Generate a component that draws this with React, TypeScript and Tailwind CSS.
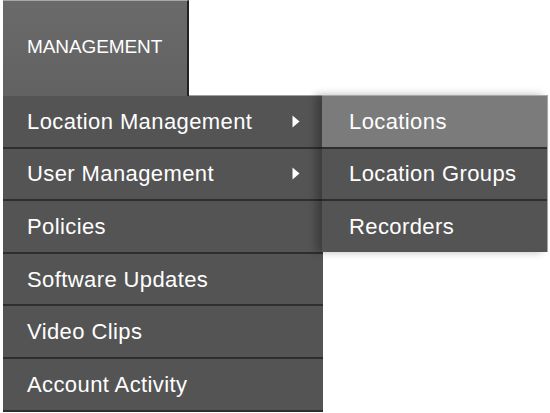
import React from "react";

// Dropdown menu: MANAGEMENT tab with nested "Location Management" submenu open

type Item = { label: string; sub?: boolean };

const MAIN_ITEMS: Item[] = [
  { label: "Location Management", sub: true },
  { label: "User Management", sub: true },
  { label: "Policies" },
  { label: "Software Updates" },
  { label: "Video Clips" },
  { label: "Account Activity" },
];

const SUB_ITEMS = ["Locations", "Location Groups", "Recorders"];

function Arrow() {
  return (
    <svg width="8" height="13" viewBox="0 0 8 13" className="shrink-0">
      <polygon points="0.5,0.5 7.5,6.5 0.5,12.5" fill="#ffffff" />
    </svg>
  );
}

export default function App() {
  return (
    <div
      className="w-[550px] h-[413px] overflow-hidden bg-white pl-[3px]"
      style={{ fontFamily: '"Liberation Sans", Arial, Helvetica, sans-serif' }}
    >
      {/* top tab */}
      <div className="relative z-10 -mb-px flex h-[96px] w-[186px] items-center border-t border-r-2 border-t-[#a8a8a8] border-r-[#222] bg-gradient-to-b from-[#6a6a6a] to-[#626262] pl-[24px] pb-[3px]">
        <span className="text-[19px] tracking-[-0.1px] text-white">MANAGEMENT</span>
      </div>

      {/* main menu */}
      <div className="relative w-[320px] border-t border-[#a0a0a0] bg-[#545454]">
        {MAIN_ITEMS.map((it) => (
          <div
            key={it.label}
            className="flex h-[52.6px] items-center justify-between border-b-2 border-[#2e2e2e] pl-[24px] pr-[23px]"
          >
            <span className="text-[22px] tracking-[0.4px] text-white">{it.label}</span>
            {it.sub && <Arrow />}
          </div>
        ))}

        {/* submenu */}
        <div className="absolute left-[319px] top-[-1px] w-[226px] border-t border-r border-[#a8a8a8] bg-[#545454] shadow-[-6px_0_8px_rgba(0,0,0,0.28)]">
          {SUB_ITEMS.map((label, i) => (
            <div
              key={label}
              className={
                i === 0
                  ? "flex h-[52.6px] items-center border-b-2 border-[#2e2e2e] bg-[#7b7b7b] pl-[27px]"
                  : i === SUB_ITEMS.length - 1
                  ? "flex h-[50.6px] items-center pl-[27px]"
                  : "flex h-[52.6px] items-center border-b-2 border-[#2e2e2e] pl-[27px]"
              }
            >
              <span className="text-[22px] tracking-[0.4px] text-white">{label}</span>
            </div>
          ))}
        </div>
      </div>
    </div>
  );
}
